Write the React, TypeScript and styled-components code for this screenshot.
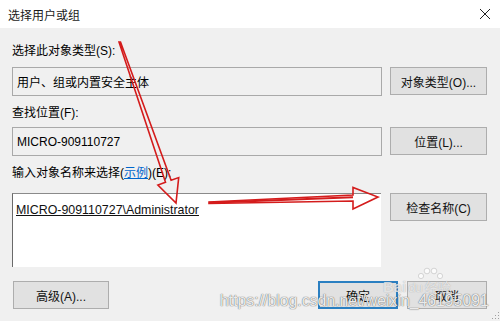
import styled, { createGlobalStyle } from "styled-components";

const GlobalStyle = createGlobalStyle`
  html, body {
    margin: 0;
    padding: 0;
    background: #f0f0f0;
  }
  body {
    font-family: "Liberation Sans", "Noto Sans CJK SC", sans-serif;
    font-size: 12px;
    color: #000;
  }
`;

const Window = styled.div`
  position: relative;
  width: 500px;
  height: 321px;
  overflow: hidden;
  background: #f0f0f0;
`;

const TitleBar = styled.div`
  height: 28px;
  background: #fff;
  display: flex;
  align-items: center;
  justify-content: space-between;
  padding: 0 9px 0 8px;
`;

const Title = styled.span`
  font-family: "Noto Sans CJK SC", sans-serif;
  font-size: 12px;
  color: #1a1a1a;
`;

const Body = styled.div`
  padding: 15px 13px 0 12px;
  display: flex;
  flex-direction: column;
`;

const Label = styled.div<{ gap: number }>`
  font-family: "Liberation Sans", "Noto Sans CJK SC", sans-serif;
  font-size: 12px;
  line-height: 16px;
  height: 16px;
  margin-bottom: ${(p) => p.gap}px;
`;

const LinkText = styled.span`
  color: #0066cc;
  text-decoration: underline;
`;

const Row = styled.div<{ gap: number }>`
  display: flex;
  align-items: flex-start;
  gap: 8px;
  margin-bottom: ${(p) => p.gap}px;
`;

const Field = styled.div`
  width: 370px;
  height: 29px;
  box-sizing: border-box;
  border: 1px solid #a9a9a9;
  background: #f0f0f0;
  padding: 0 4px;
  display: flex;
  align-items: center;
  font-size: 12px;
`;

const NameArea = styled.div`
  width: 369px;
  height: 74px;
  box-sizing: border-box;
  background: #fff;
  border-top: 1px solid #8a8a8a;
  border-left: 1px solid #6a6a6a;
  padding: 9px 0 0 3px;
  font-size: 12.4px;
`;

const Resolved = styled.span`
  text-decoration: underline;
  color: #111;
`;

const Button = styled.div<{ width?: number; primary?: boolean }>`
  width: ${(p) => p.width ?? 97}px;
  height: 28px;
  box-sizing: border-box;
  background: #e1e1e1;
  border: ${(p) => (p.primary ? "2px solid #2a7fc1" : "1px solid #adadad")};
  display: flex;
  align-items: center;
  justify-content: center;
  font-family: "Liberation Sans", "Noto Sans CJK SC", sans-serif;
  font-size: 12px;
  color: #111;
`;

const Footer = styled.div`
  display: flex;
  align-items: center;
  margin-top: 14px;
  padding-left: 1px;
`;

const Spacer = styled.div`
  flex: 1;
`;

const FooterRight = styled.div`
  display: flex;
  gap: 9px;
`;

const Overlay = styled.svg`
  position: absolute;
  left: 0;
  top: 0;
  pointer-events: none;
`;

const Watermark = styled.div`
  position: absolute;
  left: 220px;
  top: 292px;
  font-family: "Liberation Sans", sans-serif;
  font-size: 15.8px;
  line-height: 18px;
  color: rgba(255, 255, 255, 0.9);
  text-shadow: 0 0 1px rgba(70, 70, 70, 0.85), 0 0 1px rgba(70, 70, 70, 0.5);
  white-space: nowrap;
`;

const BaiduMark = styled.div`
  position: absolute;
  left: 383px;
  top: 279px;
  display: flex;
  align-items: baseline;
  gap: 2px;
  font-family: "Liberation Sans", "Noto Sans CJK SC", sans-serif;
  font-weight: bold;
  font-size: 15px;
  line-height: 15px;
  color: rgba(255, 255, 255, 0.7);
  text-shadow: 0 0 1px rgba(110, 110, 110, 0.6);
  white-space: nowrap;
`;

const BaiduSmall = styled.span`
  font-size: 13px;
  font-weight: normal;
`;

export default function App() {
  return (
    <Window>
      <GlobalStyle />
      <TitleBar>
        <Title>选择用户或组</Title>
        <svg width="12" height="12" viewBox="0 0 12 12">
          <path d="M1 1 L11 11 M11 1 L1 11" stroke="#222" strokeWidth="1" />
        </svg>
      </TitleBar>
      <Body>
        <Label gap={8}>选择此对象类型(S):</Label>
        <Row gap={9}>
          <Field>用户、组或内置安全主体</Field>
          <Button>对象类型(O)...</Button>
        </Row>
        <Label gap={6}>查找位置(F):</Label>
        <Row gap={9}>
          <Field>MICRO-909110727</Field>
          <Button>位置(L)...</Button>
        </Row>
        <Label gap={12}>
          输入对象名称来选择(<LinkText>示例</LinkText>)(E):
        </Label>
        <Row gap={0}>
          <NameArea>
            <Resolved>MICRO-909110727\Administrator</Resolved>
          </NameArea>
          <Button style={{ marginLeft: 1 }}>检查名称(C)</Button>
        </Row>
        <Footer>
          <Button width={96}>高级(A)...</Button>
          <Spacer />
          <FooterRight>
            <Button width={80} primary>
              确定
            </Button>
            <Button width={80}>取消</Button>
          </FooterRight>
        </Footer>
      </Body>

      <BaiduMark>
        Bai<BaiduSmall>du</BaiduSmall>
        <BaiduSmall>经验</BaiduSmall>
      </BaiduMark>
      <Watermark>https://blog.csdn.net/weixin_46195091</Watermark>

      <Overlay width="500" height="321" viewBox="0 0 500 321">
        <g fill="rgba(255,255,255,0.7)" stroke="rgba(120,120,120,0.45)" strokeWidth="0.6">
          <circle cx="421" cy="276" r="2.6" />
          <circle cx="427" cy="271" r="2.8" />
          <circle cx="434" cy="271" r="2.8" />
          <circle cx="440" cy="276" r="2.6" />
        </g>
        <g fill="none" stroke="#d41c1c" strokeWidth="1.6" strokeLinejoin="miter">
          <polygon points="119,42 165.5,182.3 157.9,185 176,203 178.7,177.6 171.1,180.3 120.5,42" />
          <polygon points="209,202 353,195 353,187.5 378,197 353,209 353,201 209,203.5" />
        </g>
        <path d="M209 202.7 L353 197.3" stroke="#d41c1c" strokeWidth="2" />
        <g fill="#a0a0a0">
          <rect x="495" y="315" width="1" height="1" />
          <rect x="495" y="318" width="1" height="1" />
          <rect x="492" y="318" width="1" height="1" />
          <rect x="498" y="312" width="1" height="1" />
          <rect x="498" y="315" width="1" height="1" />
          <rect x="498" y="318" width="1" height="1" />
        </g>
      </Overlay>
    </Window>
  );
}
